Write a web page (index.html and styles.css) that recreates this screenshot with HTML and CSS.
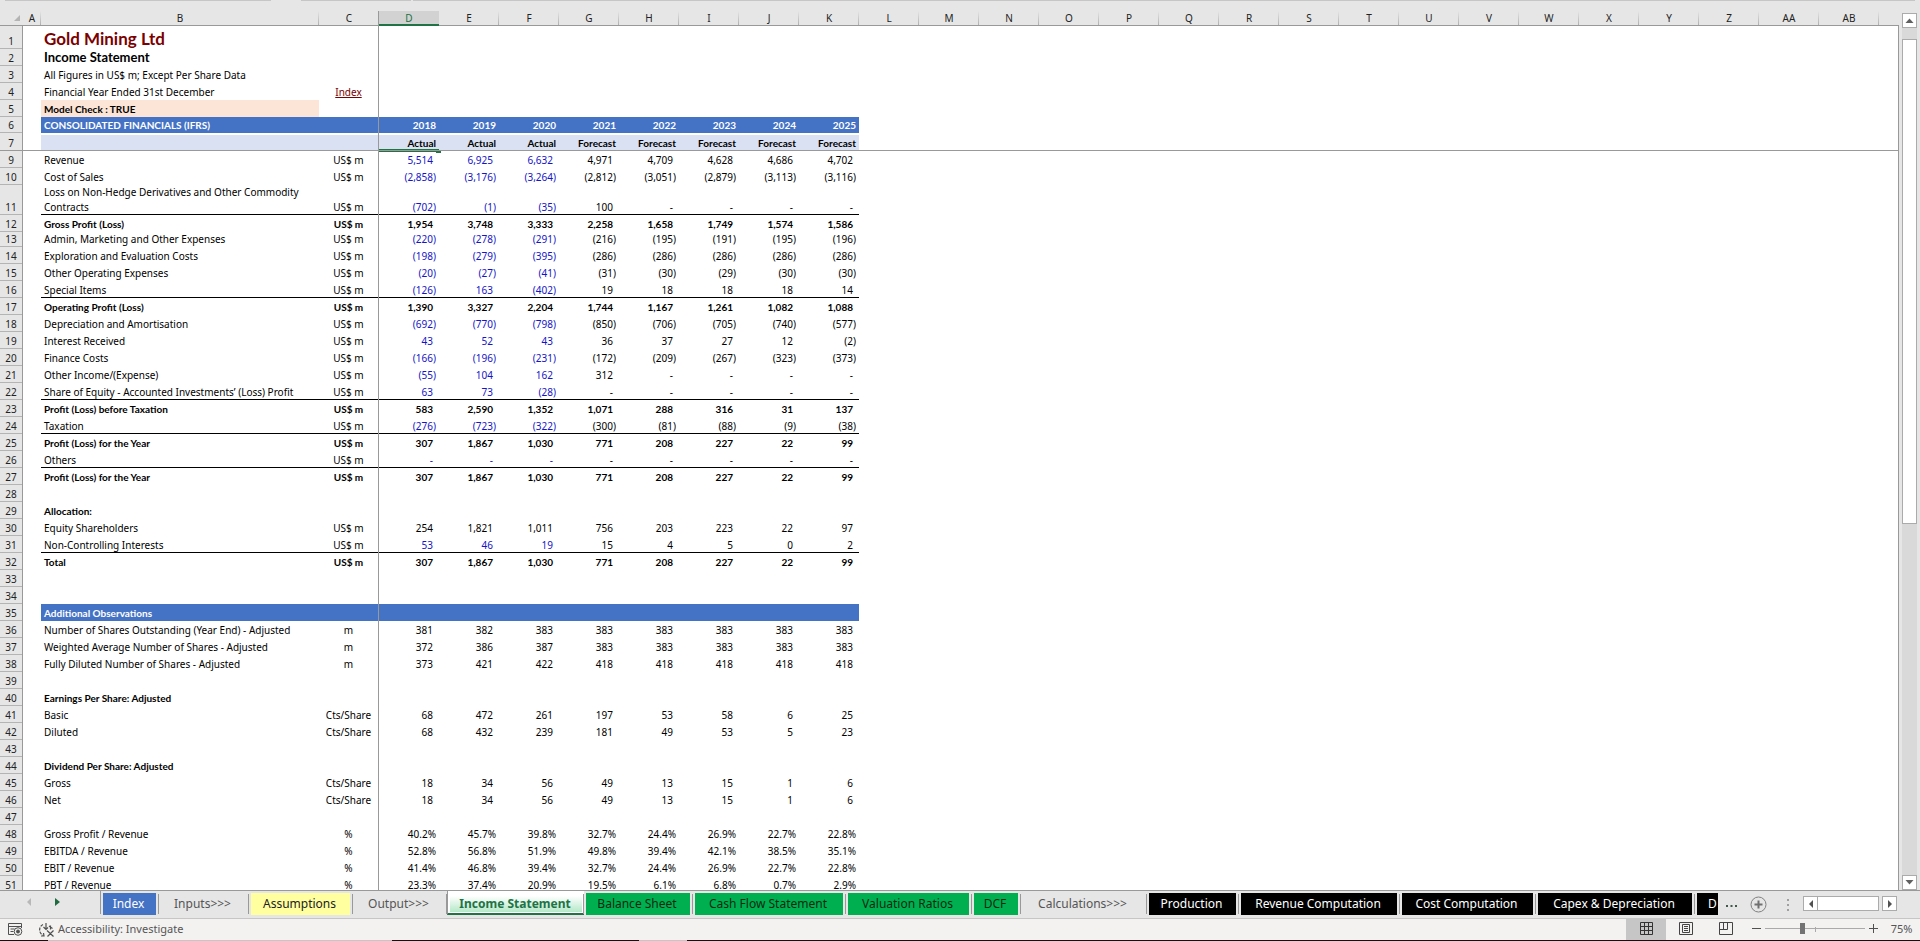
FILE: index.html
```html
<!DOCTYPE html>
<html lang="en">
<head>
<meta charset="utf-8">
<title>Gold Mining Ltd - Income Statement</title>
<link rel="stylesheet" href="styles.css">
</head>
<body>
<div class="topstrip"></div>
<main class="workarea">
  <div class="sheet">
    <table class="grid">
      <colgroup id="cols"></colgroup>
      <thead><tr id="letters"></tr></thead>
      <tbody id="rows"></tbody>
    </table>
    <div class="freeze-v"></div>
  </div>
  <div class="vscroll">
    <button class="arrow" aria-label="Scroll up"><svg width="9" height="5" viewBox="0 0 9 5"><path d="M0.500 5L4.500 0.500L8.500 5z" fill="#606060"/></svg></button>
    <div class="vtrack"><div class="vthumb"></div></div>
    <button class="arrow" aria-label="Scroll down"><svg width="9" height="5" viewBox="0 0 9 5"><path d="M0.500 0L4.500 4.500L8.500 0z" fill="#606060"/></svg></button>
  </div>
</main>
<nav class="tabbar">
  <div class="tabnav">
    <button aria-label="Previous sheet" disabled><svg width="4" height="8" viewBox="0 0 4 8"><path d="M4 0L0 4L4 8z" fill="#b8b8b8"/></svg></button>
    <button aria-label="Next sheet"><svg width="5" height="8" viewBox="0 0 5 8"><path d="M0 0L5 4L0 8z" fill="#1e6b41"/></svg></button>
  </div>
  <div class="tabs">
    <button class="tab w-index blue"><span>Index</span></button>
    <button class="tab w-inputs"><span>Inputs&gt;&gt;&gt;</span></button>
    <button class="tab w-assumptions yellow"><span>Assumptions</span></button>
    <button class="tab w-output"><span>Output&gt;&gt;&gt;</span></button>
    <button class="tab w-income active"><span>Income Statement</span></button>
    <button class="tab w-balance green"><span>Balance Sheet</span></button>
    <button class="tab w-cash green"><span>Cash Flow Statement</span></button>
    <button class="tab w-valuation green"><span>Valuation Ratios</span></button>
    <button class="tab w-dcf green"><span>DCF</span></button>
    <button class="tab w-calculations"><span>Calculations&gt;&gt;&gt;</span></button>
    <button class="tab w-production black"><span>Production</span></button>
    <button class="tab w-revenue black"><span>Revenue Computation</span></button>
    <button class="tab w-cost black"><span>Cost Computation</span></button>
    <button class="tab w-capex black"><span>Capex &amp; Depreciation</span></button>
    <button class="tab w-cut black"><span>D</span></button>
  </div>
  <button class="more" aria-label="More sheets"><svg width="12" height="3" viewBox="0 0 12 3"><path d="M0 0h2v2H0zM4.500 0h2v2h-2zM9 0h2v2H9z" fill="#3d5a4a"/></svg></button>
  <button class="add" aria-label="New sheet"><svg width="17" height="17" viewBox="0 0 17 17"><circle cx="8.500" cy="8.500" r="7.500" fill="none" stroke="#808080"/><path d="M8.500 4.500v8M4.500 8.500h8" stroke="#707070" stroke-width="2"/></svg></button>
  <svg class="grip" width="2" height="12" viewBox="0 0 2 12"><path d="M0 1h2M0 6h2M0 11h2" stroke="#a0a0a0" stroke-width="2"/></svg>
  <div class="hscroll">
    <button class="arrow" aria-label="Scroll left"><svg width="4" height="8" viewBox="0 0 4 8"><path d="M4 0L0 4L4 8z" fill="#505050"/></svg></button>
    <div class="hthumb"></div>
    <button class="arrow" aria-label="Scroll right"><svg width="4" height="8" viewBox="0 0 4 8"><path d="M0 0L4 4L0 8z" fill="#505050"/></svg></button>
  </div>
</nav>
<footer class="status">
  <button class="macro" aria-label="Record macro"><svg width="15" height="13" viewBox="0 0 15 13" fill="none" stroke="#505050"><path d="M6 11.500H.5V.5h13V5M.5 3.500h13M2.500 6h4M2.500 8.500h3"/><circle cx="10" cy="8.500" r="3.800"/><circle cx="10" cy="8.500" r="1.500" fill="#505050"/></svg></button>
  <button class="access"><svg width="15" height="14" viewBox="0 0 15 14" fill="none" stroke="#505050" stroke-width="1.200"><path d="M4 1.500A6 6 0 0 0 4.500 12.500" stroke-dasharray="3 1.200"/><path d="M4.500 10l.5 3-3 0M7 0v5.500M4.500 4L7 6.500L9 4.500M10 3l3.500 2.500M11.500 2.500v4M8 7.500l6.500 6M14.500 7.500l-6 6"/></svg><span>Accessibility: Investigate</span></button>
  <div class="views">
    <button class="view on" aria-label="Normal"><svg width="13" height="13" viewBox="0 0 13 13" fill="none" stroke="#333"><path d="M.5.5h12v12H.5zM4.500.5v12M8.500.5v12M.5 4.500h12M.5 8.500h12"/></svg></button>
    <button class="view" aria-label="Page layout"><svg width="14" height="13" viewBox="0 0 14 13" fill="none" stroke="#444"><path d="M.5.5h13v12H.5zM3.500 2.500h7v8h-7zM5 4.500h4M5 6.500h4M5 8.500h4"/></svg></button>
    <button class="view" aria-label="Page break preview"><svg width="14" height="13" viewBox="0 0 14 13" fill="none" stroke="#444"><path d="M.5.5h13v12H.5zM.5 7.500h8M4.500.5v7M8.500.5v7"/></svg></button>
  </div>
  <div class="zoom">
    <button aria-label="Zoom out"><svg width="9" height="9" viewBox="0 0 9 9"><path d="M0 4.500h9" stroke="#505050"/></svg></button>
    <div class="slider"><input type="range" min="0" max="100" value="37" aria-label="Zoom"></div>
    <button aria-label="Zoom in"><svg width="9" height="9" viewBox="0 0 9 9"><path d="M0 4.500h9M4.500 0v9" stroke="#505050"/></svg></button>
    <button class="percent">75%</button>
  </div>
</footer>
<script src="sheet.js"></script>
</body>
</html>
```
FILE: styles.css
```css
*, *::before, *::after { box-sizing: border-box; }

body {
  margin: 0;
  height: 100vh;
  display: flex;
  flex-direction: column;
  overflow: hidden;
  background: #e6e6e6;
  font-family: "Noto Sans", "Open Sans", sans-serif;
  color: #000;
}

button {
  margin: 0;
  padding: 0;
  border: 0;
  background: none;
  color: inherit;
  font: inherit;
  display: flex;
  align-items: center;
  justify-content: center;
}

svg { display: block; flex: none; }

.topstrip {
  height: 11px;
  flex: none;
  background: linear-gradient(90deg, transparent 5px, #c6c6c6 5px 271px, transparent 271px 301px, #c6c6c6 301px 411px, transparent 411px 413px, #c6c6c6 413px) 0 0 / calc(100% - 5px) 1px no-repeat;
}

/* worksheet */
.workarea { flex: 1; min-height: 0; display: flex; }

.sheet {
  position: relative;
  flex: 1;
  min-width: 0;
  overflow: hidden;
  background: linear-gradient(#e6e6e6 14px, #999 14px 15px, #fff 15px);
}

.sheet::after {
  content: "";
  position: absolute;
  top: 14px;
  right: 0;
  bottom: 0;
  width: 1px;
  background: #999;
}

.freeze-v {
  position: absolute;
  left: 378px;
  top: 0;
  bottom: 0;
  width: 1px;
  background: #999;
}

.grid {
  table-layout: fixed;
  width: 100%;
  border-collapse: separate;
  border-spacing: 0;
  font-size: 10px;
  line-height: 15px;
}

.c-head { width: 23px; }
.c-a { width: 18px; }
.c-b { width: 278px; }
.c-n { width: 60px; }

.grid th, .grid td { padding: 0; height: 17px; vertical-align: bottom; }

.grid thead th {
  height: 15px;
  line-height: 13px;
  font-weight: 400;
  color: #222;
  background: linear-gradient(#e6e6e6, #b0b0b0) right / 1px 100% no-repeat;
  border-bottom: 1px solid #999;
}
.grid thead th:last-child { background: none; }
.grid thead th.sel { background: #d2d2d2; color: #217346; border-bottom: 2px solid #217346; line-height: 12px; }
.grid thead th.corner { background: none; }
.corner svg { margin: 0 0 2px auto; width: 10px; }

.grid tbody th {
  font-weight: 400;
  text-align: center;
  color: #222;
  background: #e6e6e6;
  border-right: 1px solid #999;
  box-shadow: inset 0 -1px #b4b4b4;
}

.grid .h-title td, .grid .h-title th { height: 23px; }
.grid .h-six td, .grid .h-six th { height: 16px; }
.grid .h-seven td, .grid .h-seven th { height: 18px; }
.grid .h-tall td, .grid .h-tall th { height: 30px; }
.grid .h-short td, .grid .h-short th { height: 15px; }

.grid .label { padding: 0 3px; text-align: left; }
.grid .unit { padding-right: 1px; text-align: center; }
.grid .num { padding-right: 6px; text-align: right; white-space: nowrap; }
.grid .edge { padding-right: 3px; }
.input { color: #1414c8; }
.total td, .band td.used, .subband td.used, .check td.label { font-family: Lato, "Noto Sans", sans-serif; font-weight: 700; }
.rule td.used { box-shadow: inset 0 -1px #000; }

.band td.used { background: #4472c4; color: #fff; }
.subband td.used { background: #d9e1f2; border-top: 2px solid #fff; }
.grid .subband td, .grid .subband th { box-shadow: inset 0 -1px #999; }
.check td.label { background: #fce4d6; }

.h-title .label { font-family: Lato, sans-serif; font-size: 17px; line-height: 21px; font-weight: 700; color: #7b0000; }
.grid .subtitle .label { padding-bottom: 1px; font-family: Lato, sans-serif; font-size: 13px; line-height: 16px; font-weight: 700; }
.link { color: #7b0000; }

.picked { position: relative; }
.picked::before {
  content: "";
  position: absolute;
  left: 0;
  right: 0;
  bottom: -1px;
  height: 3px;
  border: solid #217346;
  border-width: 1px 0;
}
.picked::after {
  content: "";
  position: absolute;
  right: -2px;
  bottom: -2px;
  width: 5px;
  height: 2px;
  background: #217346;
}

/* scroll bars */
.vscroll { width: 21px; padding: 2px 3px 0; display: flex; flex-direction: column; }
.arrow { width: 15px; height: 15px; flex: none; background: #fff; border: 1px solid #ababab; }
.vtrack { flex: 1; background: #d9d9d9; padding-top: 11px; }
.vthumb { height: 58%; background: #fff; border: 1px solid #ababab; }
.hscroll { display: flex; margin: 5px 23px 0 14px; }
.hthumb { width: 61px; height: 15px; margin-right: 3px; background: #fff; border: 1px solid #ababab; border-left: 0; }

/* sheet tabs */
.tabbar {
  height: 29px;
  flex: none;
  display: flex;
  border-top: 1px solid #999;
  border-bottom: 1px solid #c6c6c6;
  font-size: 12px;
}
.tabnav { width: 101px; flex: none; display: flex; gap: 24px; padding: 0 0 2px 27px; border-right: 1px solid #999; height: 23px; }
.tabs { flex: 1; min-width: 0; display: flex; overflow: hidden; }
.tab { flex: none; height: 24px; padding: 2px 3px 0 2px; color: #555; position: relative; }
.tab span { flex: 1; height: 22px; line-height: 21px; padding-right: 2px; white-space: nowrap; }
.tab::after { content: ""; position: absolute; right: 0; top: 3px; height: 20px; width: 1px; background: #999; }
.blue span { background: #4472c4; color: #fff; }
.yellow span { background: #ffff9f; color: #222; }
.green span { background: #00b050; color: #0a2a12; }
.black span { background: #000; color: #fff; }
.active { padding: 0 2px 1px; background: #fff; border-left: 1px solid #999; border-bottom: 2px solid #217346; color: #217346; font-weight: 700; }
.active span { height: 20px; line-height: 24px; background: linear-gradient(#fff 20%, #b4e8c8); }

.w-index { width: 58px; }
.w-inputs { width: 90px; }
.w-assumptions { width: 104px; }
.w-output { width: 94px; }
.w-income { width: 137px; }
.w-balance { width: 109px; }
.w-cash { width: 153px; }
.w-valuation { width: 126px; }
.w-dcf { width: 49px; }
.w-calculations { width: 126px; }
.w-production { width: 92px; }
.w-revenue { width: 161px; }
.w-cost { width: 136px; }
.w-capex { width: 159px; }
.w-cut { width: 60px; }
.w-cut span { text-align: left; padding-left: 11px; }

.more { width: 27px; padding-top: 4px; }
.add { width: 27px; }
.grip { margin: 8px 0 0 15px; }

/* status bar */
.status {
  height: 22px;
  flex: none;
  display: flex;
  background: linear-gradient(90deg, #111 48px, #c6c6c6 48px 392px, #111 392px 639px, #c6c6c6 639px 687px, #111 687px) 0 100% / 100% 1px no-repeat #f3f2f1;
  font-size: 11px;
  color: #555;
  padding: 0 7px 1px 8px;
}
.macro { width: 15px; margin-right: 16px; }
.access { gap: 4px; }
.access span { line-height: 16px; padding-bottom: 2px; }
.views { margin-left: auto; display: flex; }
.view { width: 40px; padding-bottom: 2px; }
.view.on { background: #c6c6c6; }
.zoom { display: flex; align-items: center; padding: 0 0 2px 6px; }
.slider { position: relative; width: 100px; height: 20px; margin: 0 4px; }
.slider::before { content: ""; position: absolute; left: 50px; top: 8px; width: 1px; height: 5px; background: #aaa; }
.slider input { position: absolute; inset: 0; width: 100%; height: 20px; margin: 0; appearance: none; background: linear-gradient(#aaa, #aaa) center / 100% 1px no-repeat; }
.slider input::-webkit-slider-thumb { appearance: none; width: 5px; height: 11px; background: #737373; }
.percent { width: 35px; padding-left: 12px; }
```
FILE: sheet.js
```javascript
const letters = ['A', 'B', 'C', 'D', 'E', 'F', 'G', 'H', 'I', 'J', 'K', 'L', 'M', 'N', 'O', 'P', 'Q', 'R', 'S', 'T', 'U', 'V', 'W', 'X', 'Y', 'Z', 'AA', 'AB'];

// row number | label | unit | values D..K | row classes ("in" = first three values are inputs)
const data = `
1|Gold Mining Ltd|||h-title
2|Income Statement|||subtitle
3|All Figures in US$ m; Except Per Share Data|||
4|Financial Year Ended 31st December|@Index||
5|Model Check : TRUE|||check
6|CONSOLIDATED FINANCIALS (IFRS)||2018 2019 2020 2021 2022 2023 2024 2025|band h-six edge
7|||Actual Actual Actual Forecast Forecast Forecast Forecast Forecast|subband h-seven edge
9|Revenue|US$ m|5,514 6,925 6,632 4,971 4,709 4,628 4,686 4,702|in
10|Cost of Sales|US$ m|(2,858) (3,176) (3,264) (2,812) (3,051) (2,879) (3,113) (3,116)|in
11|Loss on Non-Hedge Derivatives and Other Commodity Contracts|US$ m|(702) (1) (35) 100 - - - -|in rule h-tall
12|Gross Profit (Loss)|US$ m|1,954 3,748 3,333 2,258 1,658 1,749 1,574 1,586|total
13|Admin, Marketing and Other Expenses|US$ m|(220) (278) (291) (216) (195) (191) (195) (196)|in h-short
14|Exploration and Evaluation Costs|US$ m|(198) (279) (395) (286) (286) (286) (286) (286)|in
15|Other Operating Expenses|US$ m|(20) (27) (41) (31) (30) (29) (30) (30)|in
16|Special Items|US$ m|(126) 163 (402) 19 18 18 18 14|in rule
17|Operating Profit (Loss)|US$ m|1,390 3,327 2,204 1,744 1,167 1,261 1,082 1,088|total
18|Depreciation and Amortisation|US$ m|(692) (770) (798) (850) (706) (705) (740) (577)|in
19|Interest Received|US$ m|43 52 43 36 37 27 12 (2)|in
20|Finance Costs|US$ m|(166) (196) (231) (172) (209) (267) (323) (373)|in
21|Other Income/(Expense)|US$ m|(55) 104 162 312 - - - -|in
22|Share of Equity - Accounted Investments’ (Loss) Profit|US$ m|63 73 (28) - - - - -|in rule
23|Profit (Loss) before Taxation|US$ m|583 2,590 1,352 1,071 288 316 31 137|total
24|Taxation|US$ m|(276) (723) (322) (300) (81) (88) (9) (38)|in rule
25|Profit (Loss) for the Year|US$ m|307 1,867 1,030 771 208 227 22 99|total
26|Others|US$ m|- - - - - - - -|in rule
27|Profit (Loss) for the Year|US$ m|307 1,867 1,030 771 208 227 22 99|total
28||||
29|Allocation:|||total
30|Equity Shareholders|US$ m|254 1,821 1,011 756 203 223 22 97|
31|Non-Controlling Interests|US$ m|53 46 19 15 4 5 0 2|in rule
32|Total|US$ m|307 1,867 1,030 771 208 227 22 99|total
33||||
34||||
35|Additional Observations|||band
36|Number of Shares Outstanding (Year End) - Adjusted|m|381 382 383 383 383 383 383 383|
37|Weighted Average Number of Shares - Adjusted|m|372 386 387 383 383 383 383 383|
38|Fully Diluted Number of Shares - Adjusted|m|373 421 422 418 418 418 418 418|
39||||
40|Earnings Per Share: Adjusted|||total
41|Basic|Cts/Share|68 472 261 197 53 58 6 25|
42|Diluted|Cts/Share|68 432 239 181 49 53 5 23|
43||||
44|Dividend Per Share: Adjusted|||total
45|Gross|Cts/Share|18 34 56 49 13 15 1 6|
46|Net|Cts/Share|18 34 56 49 13 15 1 6|
47||||
48|Gross Profit / Revenue|%|40.2% 45.7% 39.8% 32.7% 24.4% 26.9% 22.7% 22.8%|
49|EBITDA / Revenue|%|52.8% 56.8% 51.9% 49.8% 39.4% 42.1% 38.5% 35.1%|
50|EBIT / Revenue|%|41.4% 46.8% 39.4% 32.7% 24.4% 26.9% 22.7% 22.8%|
51|PBT / Revenue|%|23.3% 37.4% 20.9% 19.5% 6.1% 6.8% 0.7% 2.9%|
`.trim().split('\n').map(line => line.split('|'));

document.getElementById('cols').innerHTML =
  '<col class="c-head"><col class="c-a"><col class="c-b">' + '<col class="c-n">'.repeat(26) + '<col>';

document.getElementById('letters').innerHTML =
  '<th class="corner"><svg width="10" height="9" viewBox="0 0 10 9"><path d="M7 1v6H1z" fill="#b4b4b4"/></svg></th>' +
  letters.map(l => `<th${l === 'D' ? ' class="sel"' : ''}>${l}</th>`).join('') + '<th></th>';

document.getElementById('rows').innerHTML = data.map(([n, label, unit, values, classes]) => {
  const flags = classes.split(' ');
  const cells = values ? values.split(' ') : Array(8).fill('');
  const nums = cells.map((v, i) => {
    const cls = ['num', 'used'];
    if (flags.includes('edge') || /[)%]$/.test(v)) cls.push('edge');
    if (flags.includes('in') && i < 3) cls.push('input');
    if (n === '7' && i === 0) cls.push('picked');
    return `<td class="${cls.join(' ')}">${v}</td>`;
  }).join('');
  const unitHtml = unit[0] === '@' ? `<a class="link" href="#index">${unit.slice(1)}</a>` : unit;
  return `<tr class="${classes.replace('edge', '').trim()}"><th>${n}</th><td></td><td class="label used">${label}</td>` +
    `<td class="unit used">${unitHtml}</td>${nums}<td colspan="18"></td></tr>`;
}).join('');
```
